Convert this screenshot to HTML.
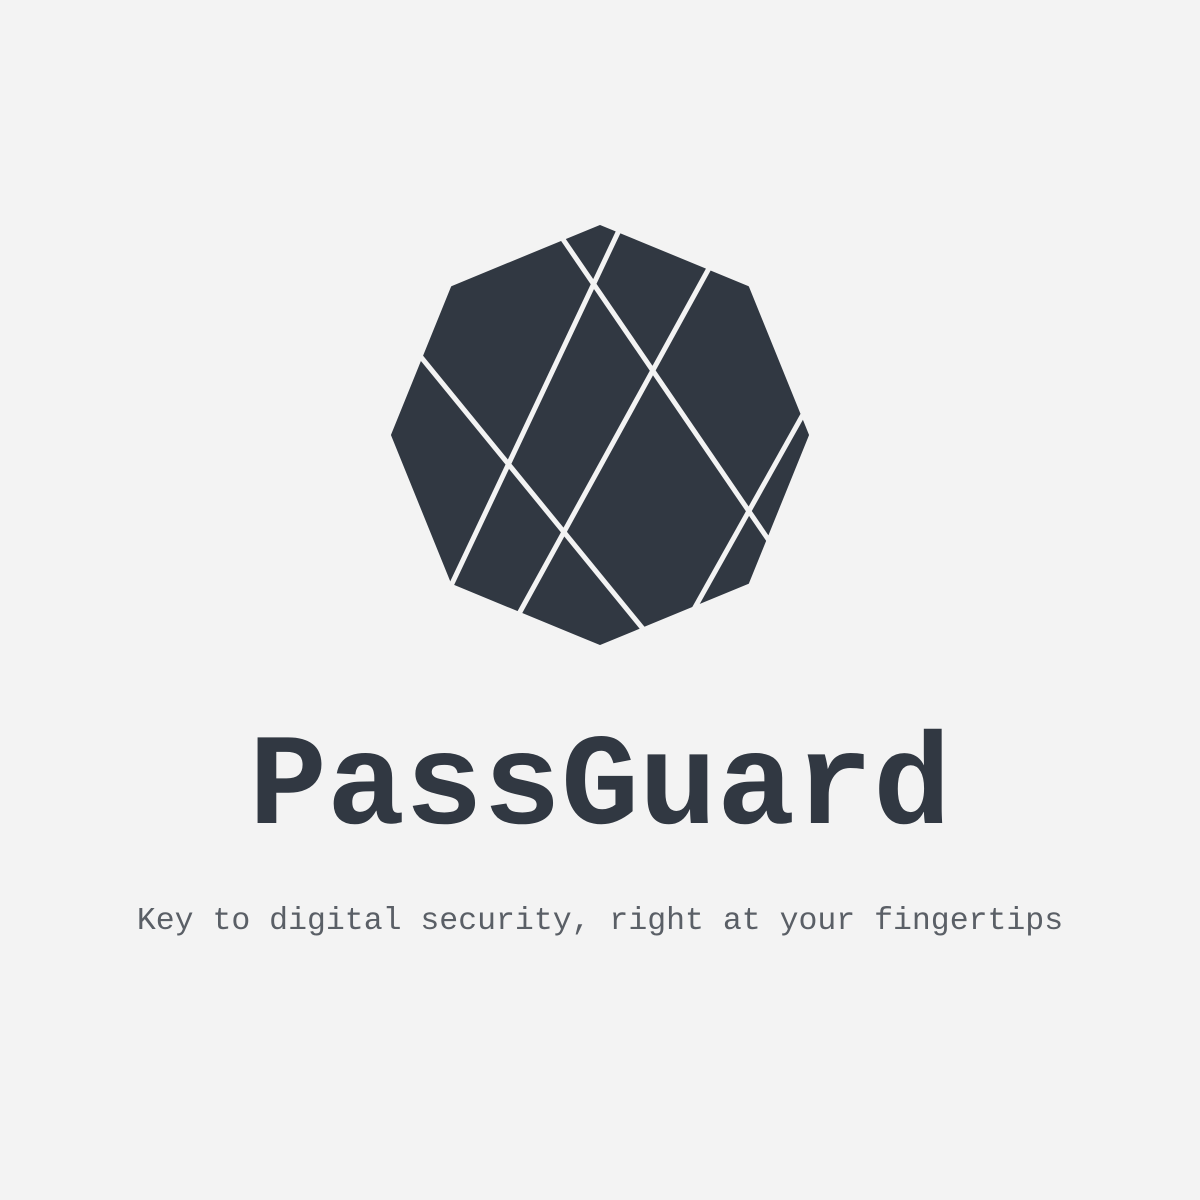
<!DOCTYPE html>
<html><head><meta charset="utf-8"><style>
html,body{margin:0;padding:0;background:#f3f3f3;width:1200px;height:1200px;overflow:hidden}
svg{position:absolute;left:0;top:0}
.t{position:absolute;left:0;width:1200px;text-align:center;font-family:"Liberation Mono",monospace;white-space:nowrap}
</style></head><body>
<svg width="1200" height="1200" viewBox="0 0 1200 1200">
<polygon points="600,226 748,287 808,435 748,583 600,644 452,583 392,435 452,287" fill="#313842" stroke="#313842" stroke-width="2" stroke-linejoin="round"/>
<g stroke="#f3f3f3" stroke-width="5" stroke-linecap="butt">
<line x1="558" y1="232" x2="772" y2="545"/>
<line x1="622" y1="224" x2="448" y2="592"/>
<line x1="713" y1="261" x2="515" y2="621"/>
<line x1="416" y1="351" x2="648" y2="635"/>
<line x1="810" y1="402" x2="689" y2="618"/>
</g>
</svg>
<div class="t" style="top:720px;font-size:130px;font-weight:bold;color:#313842;line-height:140px">PassGuard</div>
<div class="t" style="top:902px;font-size:31.5px;color:#5a5f66;line-height:40px">Key to digital security, right at your fingertips</div>
</body></html>
